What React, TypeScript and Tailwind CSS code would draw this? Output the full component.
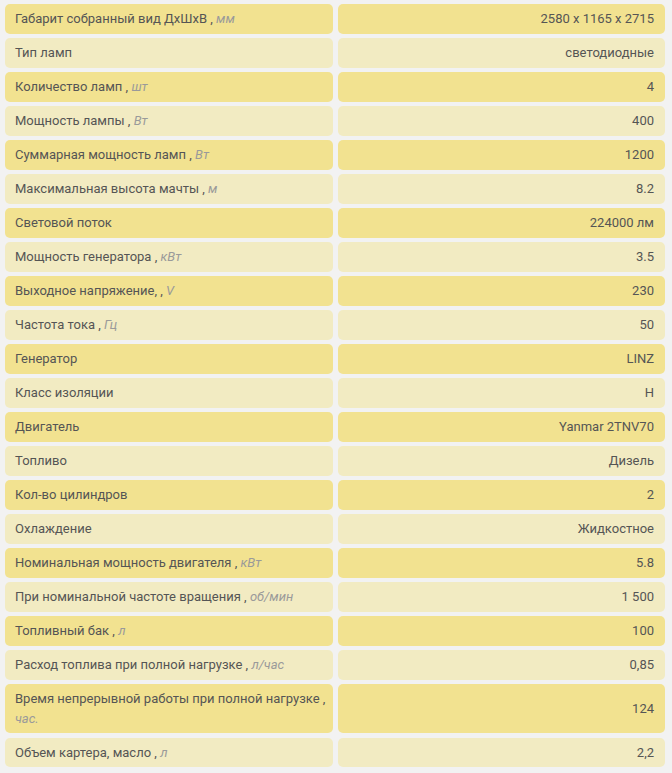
type Spec = {
  label: string;
  unit?: string;
  value: string;
  breakUnit?: boolean;
};

const specs: Spec[] = [
  { label: "Габарит собранный вид ДхШхВ", unit: "мм", value: "2580 x 1165 x 2715" },
  { label: "Тип ламп", value: "светодиодные" },
  { label: "Количество ламп", unit: "шт", value: "4" },
  { label: "Мощность лампы", unit: "Вт", value: "400" },
  { label: "Суммарная мощность ламп", unit: "Вт", value: "1200" },
  { label: "Максимальная высота мачты", unit: "м", value: "8.2" },
  { label: "Световой поток", value: "224000 лм" },
  { label: "Мощность генератора", unit: "кВт", value: "3.5" },
  { label: "Выходное напряжение,", unit: "V", value: "230" },
  { label: "Частота тока", unit: "Гц", value: "50" },
  { label: "Генератор", value: "LINZ" },
  { label: "Класс изоляции", value: "H" },
  { label: "Двигатель", value: "Yanmar 2TNV70" },
  { label: "Топливо", value: "Дизель" },
  { label: "Кол-во цилиндров", value: "2" },
  { label: "Охлаждение", value: "Жидкостное" },
  { label: "Номинальная мощность двигателя", unit: "кВт", value: "5.8" },
  { label: "При номинальной частоте вращения", unit: "об/мин", value: "1 500" },
  { label: "Топливный бак", unit: "л", value: "100" },
  { label: "Расход топлива при полной нагрузке", unit: "л/час", value: "0,85" },
  { label: "Время непрерывной работы при полной нагрузке", unit: "час.", value: "124", breakUnit: true },
  { label: "Объем картера, масло", unit: "л", value: "2,2" },
];

export default function App() {
  return (
    <div className="min-h-[773px] bg-[#f2f2f2] pt-1 pb-[6px] pl-[5px] pr-[7px] font-['Roboto',_'Open_Sans',_sans-serif] text-[13px] text-[#555555]">
      <div className="grid grid-cols-2 gap-x-[5px] gap-y-[4.5px]">
        {specs.map((spec, i) => {
          const bg = i % 2 === 0 ? "bg-[#f2e290]" : "bg-[#f2ebc2]";
          return (
            <div key={spec.label} className="contents">
              <div className={`${bg} rounded-[5px] px-[10px] py-[5px] leading-[19.5px]`}>
                {spec.unit ? <span className="whitespace-nowrap">{spec.label} ,</span> : spec.label}
                {spec.breakUnit && <br />}
                {spec.unit && (
                  <>
                    {" "}
                    <span className="italic text-[#9a9a9a]">{spec.unit}</span>
                  </>
                )}
              </div>
              <div className={`${bg} flex items-center justify-end rounded-[5px] px-[11px] py-[5px] leading-[19.5px]`}>
                {spec.value}
              </div>
            </div>
          );
        })}
      </div>
    </div>
  );
}
